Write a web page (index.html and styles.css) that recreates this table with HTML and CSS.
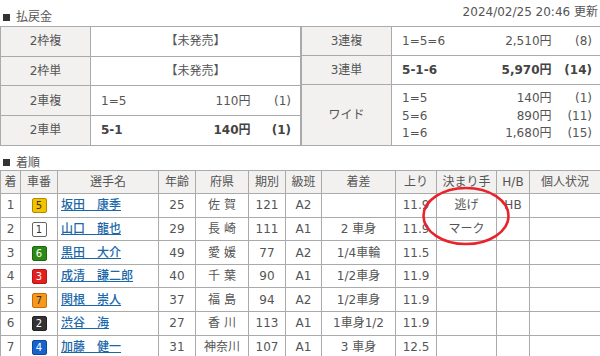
FILE: index.html
```html
<!DOCTYPE html>
<html lang="ja">
<head>
<meta charset="utf-8">
<title>払戻金・着順</title>
<link rel="stylesheet" href="styles.css">
</head>
<body>
<div class="page">
  <div class="topbar">
    <h2 class="sec-title"><span class="sq"></span>払戻金</h2>
    <div class="updated">2024/02/25 20:46 更新</div>
  </div>

  <div class="payouts">
    <table class="pay">
      <colgroup><col class="c-label"><col class="c-combo"><col class="c-amt"><col class="c-pop"></colgroup>
      <tr><th>2枠複</th><td colspan="3" class="na">【未発売】</td></tr>
      <tr><th>2枠単</th><td colspan="3" class="na">【未発売】</td></tr>
      <tr><th>2車複</th><td class="combo">1=5</td><td class="amt">110円</td><td class="pop">(1)</td></tr>
      <tr class="hit"><th>2車単</th><td class="combo">5-1</td><td class="amt">140円</td><td class="pop">(1)</td></tr>
    </table>
    <table class="pay">
      <colgroup><col class="c-label"><col class="c-combo"><col class="c-amt"><col class="c-pop"></colgroup>
      <tr><th>3連複</th><td class="combo">1=5=6</td><td class="amt">2,510円</td><td class="pop">(8)</td></tr>
      <tr class="hit"><th>3連単</th><td class="combo">5-1-6</td><td class="amt">5,970円</td><td class="pop">(14)</td></tr>
      <tr class="multi">
        <th>ワイド</th>
        <td class="combo"><div>1=5</div><div>5=6</div><div>1=6</div></td>
        <td class="amt"><div>140円</div><div>890円</div><div>1,680円</div></td>
        <td class="pop"><div>(1)</div><div>(11)</div><div>(15)</div></td>
      </tr>
    </table>
  </div>

  <h2 class="sec-title sec2"><span class="sq"></span>着順</h2>

  <table class="result">
    <colgroup>
      <col class="w20"><col class="w37"><col class="w101"><col class="w37"><col class="w53"><col class="w37">
      <col class="w36"><col class="w74"><col class="w41"><col class="w60"><col class="w33"><col class="w71">
    </colgroup>
    <thead>
      <tr><th>着</th><th>車番</th><th>選手名</th><th>年齢</th><th>府県</th><th>期別</th><th>級班</th><th>着差</th><th>上り</th><th>決まり手</th><th>H/B</th><th>個人状況</th></tr>
    </thead>
    <tbody>
      <tr><td>1</td><td><span class="car car5">5</span></td><td class="name"><a href="#">坂田　康季</a></td><td>25</td><td>佐 賀</td><td>121</td><td>A2</td><td></td><td>11.9</td><td>逃げ</td><td>HB</td><td></td></tr>
      <tr><td>2</td><td><span class="car car1">1</span></td><td class="name"><a href="#">山口　龍也</a></td><td>29</td><td>長 崎</td><td>111</td><td>A1</td><td>2 車身</td><td>11.9</td><td>マーク</td><td></td><td></td></tr>
      <tr><td>3</td><td><span class="car car6">6</span></td><td class="name"><a href="#">黒田　大介</a></td><td>49</td><td>愛 媛</td><td>77</td><td>A2</td><td>1/4車輪</td><td>11.5</td><td></td><td></td><td></td></tr>
      <tr><td>4</td><td><span class="car car3">3</span></td><td class="name"><a href="#">成清　謙二郎</a></td><td>40</td><td>千 葉</td><td>90</td><td>A1</td><td>1/2車身</td><td>11.9</td><td></td><td></td><td></td></tr>
      <tr><td>5</td><td><span class="car car7">7</span></td><td class="name"><a href="#">関根　崇人</a></td><td>37</td><td>福 島</td><td>94</td><td>A2</td><td>1/2車身</td><td>11.9</td><td></td><td></td><td></td></tr>
      <tr><td>6</td><td><span class="car car2">2</span></td><td class="name"><a href="#">渋谷　海</a></td><td>27</td><td>香 川</td><td>113</td><td>A1</td><td>1車身1/2</td><td>11.9</td><td></td><td></td><td></td></tr>
      <tr><td>7</td><td><span class="car car4">4</span></td><td class="name"><a href="#">加藤　健一</a></td><td>31</td><td>神奈川</td><td>107</td><td>A1</td><td>3 車身</td><td>12.5</td><td></td><td></td><td></td></tr>
    </tbody>
  </table>

  <svg class="mark" width="92" height="62" viewBox="0 0 92 62" aria-hidden="true">
    <ellipse cx="46" cy="31" rx="42.5" ry="28" fill="none" stroke="#e8232b" stroke-width="2.6"/>
  </svg>
</div>
</body>
</html>
```

FILE: styles.css
```css
html, body {
  margin: 0;
  padding: 0;
  background: #fff;
}

body {
  font-family: "DejaVu Sans", "Noto Sans CJK JP", sans-serif;
  font-size: 12px;
  color: #555;
}

.page {
  position: relative;
  width: 600px;
  height: 356px;
  overflow: hidden;
}

/* headings */
.topbar {
  display: flex;
  justify-content: space-between;
  height: 26px;
}

.sec-title {
  margin: 0;
  font-size: 12px;
  font-weight: normal;
  line-height: 14px;
  color: #555;
  display: flex;
  align-items: center;
}

.topbar .sec-title {
  align-self: flex-end;
  padding-bottom: 2px;
}

.sq {
  display: inline-block;
  width: 7px;
  height: 7px;
  background: #333;
  margin: 0 6px 0 3px;
}

.updated {
  margin-top: 5px;
  padding-right: 2px;
  line-height: 14px;
  color: #555;
}

.sec2 {
  margin-top: 10px;
}

/* payout tables */
.payouts {
  display: flex;
}

.pay {
  width: 300px;
  border-collapse: collapse;
  table-layout: fixed;
}

.c-label { width: 90px; }
.c-combo { width: 80px; }
.c-amt { width: 80px; }
.c-pop { width: 50px; }

.pay th,
.pay td {
  height: 28px;
  padding: 0;
  border-top: 1px solid #aaa;
  border-bottom: 1px solid #aaa;
  line-height: 16px;
  color: #555;
}

.pay th {
  font-weight: normal;
  background: #f2f1f0;
  border: 1px solid #aaa;
  text-align: center;
}

.pay td.na {
  text-align: center;
  border-right: 1px solid #aaa;
}

.pay td.combo {
  text-align: left;
  padding-left: 10px;
}

.pay td.amt {
  text-align: right;
}

.pay td.pop {
  text-align: right;
  padding-right: 9px;
  border-right: 1px solid #aaa;
}

.pay .hit td {
  font-weight: bold;
  color: #444;
}

.pay .multi td {
  height: auto;
  padding-top: 5px;
  padding-bottom: 2px;
  line-height: 17.5px;
}

/* results table */
.result {
  width: 600px;
  border-collapse: collapse;
  table-layout: fixed;
}

.w20 { width: 20px; }
.w33 { width: 33px; }
.w36 { width: 36px; }
.w37 { width: 37px; }
.w41 { width: 41px; }
.w53 { width: 53px; }
.w60 { width: 60px; }
.w71 { width: 71px; }
.w74 { width: 74px; }
.w101 { width: 101px; }

.result tr {
  height: 23.6px;
}

.result th,
.result td {
  border: 1px solid #aaa;
  padding: 0;
  text-align: center;
  line-height: 16px;
  color: #555;
  white-space: nowrap;
}

.result th {
  background: #f2f1f0;
  font-weight: normal;
}

.result td.name {
  text-align: left;
  padding-left: 3px;
}

.result td.name a {
  color: #1a68aa;
  font-weight: 500;
  text-decoration: underline;
}

/* car number badges */
.car {
  display: inline-block;
  box-sizing: border-box;
  width: 15px;
  height: 15px;
  border-radius: 2px;
  border: 1px solid #777;
  font-size: 10px;
  line-height: 13px;
  text-align: center;
  vertical-align: middle;
}

.car1 { background: #fff; color: #333; border-color: #666; }
.car2 { background: #333; color: #fff; border-color: #222; }
.car3 { background: #e3201f; color: #fff; border-color: #b71414; }
.car4 { background: #1663cc; color: #fff; border-color: #0e4a9c; }
.car5 { background: #f3c300; color: #333; border-color: #b18a00; }
.car6 { background: #2d8a16; color: #fff; border-color: #1f650e; }
.car7 { background: #f7981d; color: #333; border-color: #c26f07; }

/* hand-drawn annotation */
.mark {
  position: absolute;
  left: 420px;
  top: 185px;
}
```
